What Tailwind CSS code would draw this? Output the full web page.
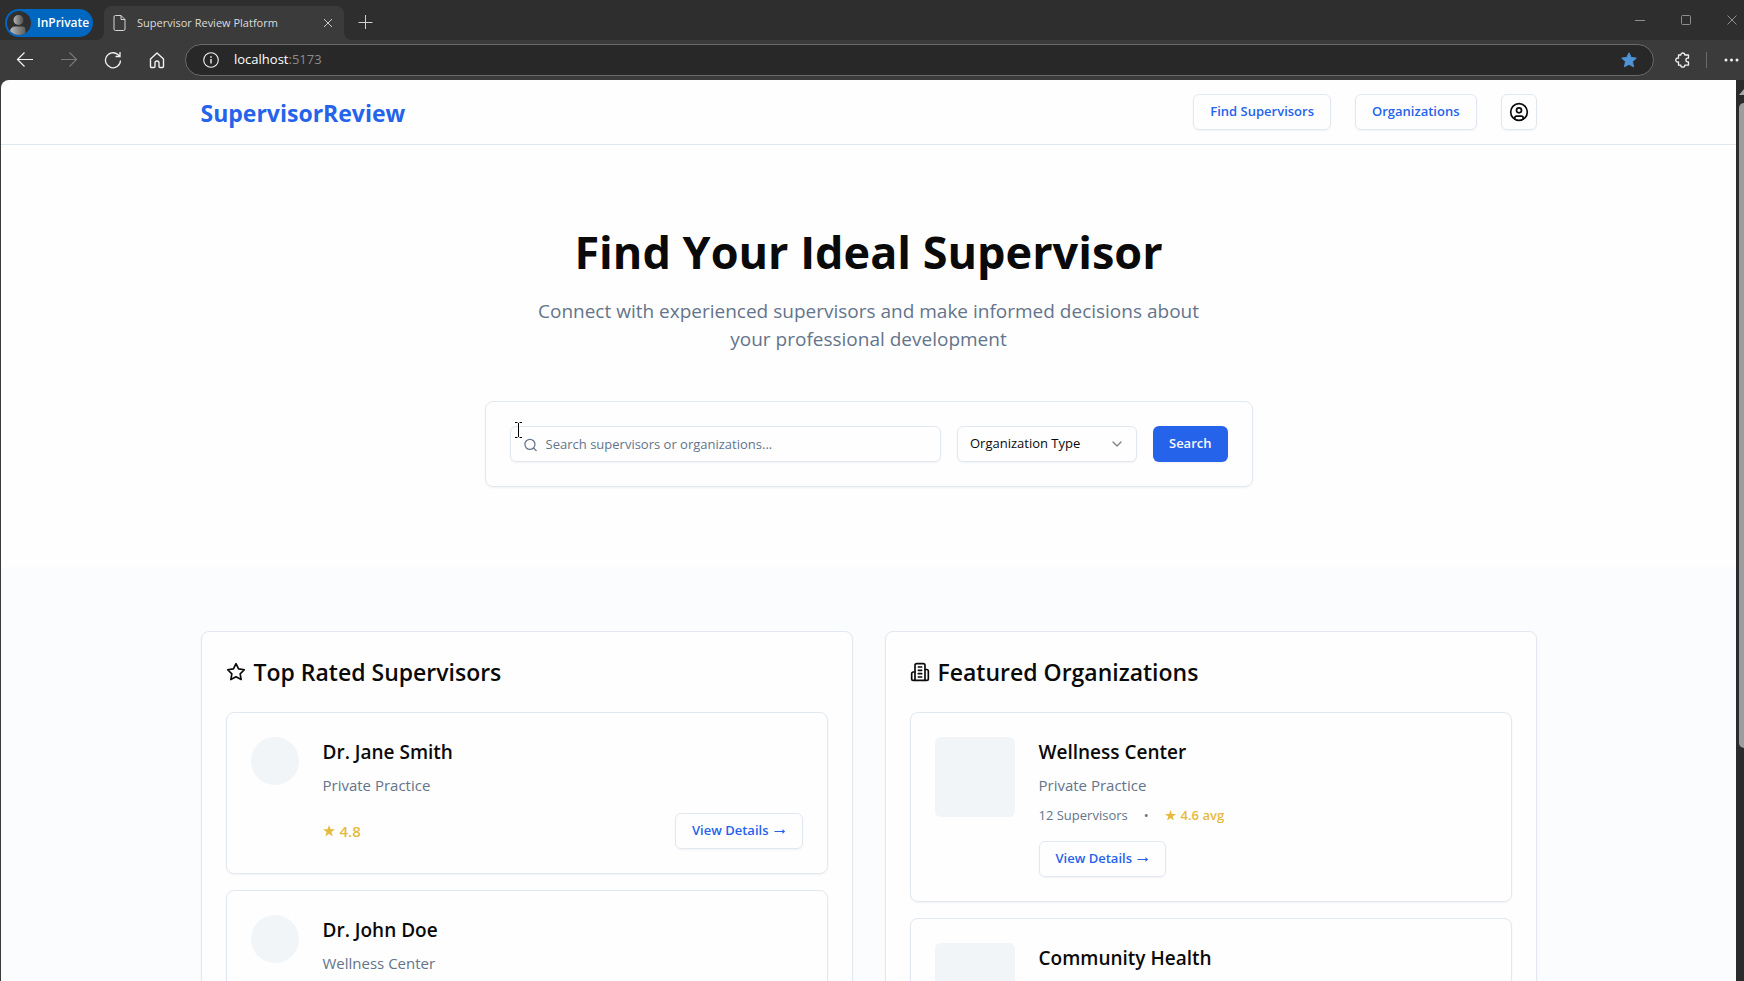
<!DOCTYPE html>
<html lang="en">
<head>
<meta charset="utf-8">
<meta name="viewport" content="width=device-width, initial-scale=1">
<title>Supervisor Review Platform</title>
<script src="https://cdn.jsdelivr.net/npm/@tailwindcss/browser@4"></script>
</head>
<body class="flex h-screen flex-col overflow-hidden bg-[#3b3b3b] font-['Open_Sans','Noto_Sans',sans-serif] text-[#0a0a0a]">

<!-- Tab strip -->
<div class="flex h-10 shrink-0 bg-[#2e2e2e] pl-[5px]">
  <button type="button" class="mt-[9px] flex h-7 w-[88px] items-center gap-1.5 rounded-full bg-[#0067c0] pl-0.5 text-xs font-semibold text-white">
    <svg class="size-6" viewBox="0 0 24 24" aria-hidden="true">
      <defs>
        <linearGradient id="person" x1="0" x2="1"><stop offset="0" stop-color="#b9b9b9"/><stop offset="1" stop-color="#5d5d5d"/></linearGradient>
        <linearGradient id="head" x1="0" x2="1"><stop offset="0" stop-color="#b4b4b4"/><stop offset="1" stop-color="#4c4c4c"/></linearGradient>
        <clipPath id="disc"><circle cx="12" cy="12" r="12"/></clipPath>
      </defs>
      <circle cx="12" cy="12" r="12" fill="#2f2f2f"/>
      <g clip-path="url(#disc)"><path d="M3 24v-3.500a5 5 0 0 1 5-5h7.500a3 3 0 0 1 3 3V24z" fill="url(#person)"/><circle cx="11.500" cy="9" r="5" fill="url(#head)"/></g>
    </svg>
    InPrivate
  </button>
  <div class="relative ml-[11px] mt-1.5 flex w-60 items-center rounded-t-lg bg-[#3b3b3b] px-2">
    <!-- Flared feet of the active tab -->
    <svg class="absolute -left-2 bottom-0 size-2" viewBox="0 0 8 8" fill="#3b3b3b" aria-hidden="true"><path d="M8 0v8H0a8 8 0 0 0 8-8z"/></svg>
    <svg class="absolute -right-2 bottom-0 size-2" viewBox="0 0 8 8" fill="#3b3b3b" aria-hidden="true"><path d="M0 0v8h8a8 8 0 0 1-8-8z"/></svg>
    <svg class="size-4 text-[#d6d6d6]" viewBox="0 0 16 16" fill="none" stroke="currentColor" aria-hidden="true"><path d="M3.500.5h5.500l4 4V14a1.500 1.500 0 0 1-1.500 1.500h-8A1.500 1.500 0 0 1 2 14V2A1.500 1.500 0 0 1 3.500.5zM9 .5V4.500h4"/></svg>
    <span class="ml-[9px] flex-1 whitespace-nowrap text-[11px] text-[#dcdcdc]">Supervisor Review Platform</span>
    <button type="button" aria-label="Close tab" class="px-[3px] py-1 text-[#c8c8c8]"><svg class="size-2.5" viewBox="0 0 10 10" fill="none" stroke="currentColor"><path d="m1 1 8 8M9 1 1 9"/></svg></button>
  </div>
  <button type="button" aria-label="New tab" class="ml-[13px] mt-1 text-[#d0d0d0]"><svg class="size-4" viewBox="0 0 16 16" fill="none" stroke="currentColor"><path d="M8.500 1v14M1.500 8.500h14"/></svg></button>
  <div class="ml-auto flex items-center gap-9 pr-[7px] text-[#8f8f8f]">
    <button type="button" aria-label="Minimize"><svg class="size-2.5" viewBox="0 0 10 10" fill="none" stroke="currentColor"><path d="M0 5.500h10"/></svg></button>
    <button type="button" aria-label="Maximize"><svg class="size-2.5" viewBox="0 0 10 10" fill="none" stroke="currentColor"><rect x=".5" y=".5" width="9" height="9" rx="1"/></svg></button>
    <button type="button" aria-label="Close"><svg class="size-2.5" viewBox="0 0 10 10" fill="none" stroke="currentColor"><path d="m.5.5 9 9M9.500.5l-9 9"/></svg></button>
  </div>
</div>

<!-- Toolbar -->
<div class="flex h-10 shrink-0 items-center bg-[#3b3b3b] pl-4 pr-[5px] text-[#f2f2f2]">
  <div class="flex items-center gap-[26px]">
    <button type="button" aria-label="Back"><svg class="size-[18px]" viewBox="0 0 18 18" fill="none" stroke="currentColor" stroke-width="1.200"><path d="M17 8.500H1.500M8.500 1.500l-7 7 7 7"/></svg></button>
    <button type="button" aria-label="Forward" disabled class="text-[#787878]"><svg class="size-[18px]" viewBox="0 0 18 18" fill="none" stroke="currentColor" stroke-width="1.200"><path d="M1 8.500h15.500M9.500 1.500l7 7-7 7"/></svg></button>
    <button type="button" aria-label="Refresh"><svg class="size-[18px]" viewBox="0 0 18 18" fill="none" stroke="currentColor" stroke-width="1.300"><path d="M16.500 9.500a7.500 7.500 0 1 1-2.600-5.900L15.800 5.200M16 1v4.500h-4.500"/></svg></button>
    <button type="button" aria-label="Home"><svg class="size-[18px]" viewBox="0 0 18 18" fill="none" stroke="currentColor" stroke-width="1.400" stroke-linejoin="round"><path d="M2.500 8 9 2l6.500 6v7.500a1 1 0 0 1-1 1H12a1 1 0 0 1-1-1V12a2 2 0 0 0-4 0v3.500a1 1 0 0 1-1 1H3.500a1 1 0 0 1-1-1z"/></svg></button>
  </div>
  <div class="ml-[19px] flex h-8 flex-1 items-center rounded-full border border-[#6a6a6a] bg-[#282828] pl-[17px] pr-4">
    <svg class="size-4" viewBox="0 0 16 16" fill="none" stroke="currentColor" stroke-width="1.100" aria-hidden="true"><circle cx="8" cy="8" r="7.300"/><path d="M8 7v4.500" stroke-width="1.400"/><path d="M8 4.300v1.400" stroke-width="1.500"/></svg>
    <span class="ml-[15px] flex-1 text-[13px] text-white">localhost<span class="text-[#8b8b8b]">:5173</span></span>
    <button type="button" aria-label="Favorite" class="text-[#4f93d6]"><svg class="size-4" viewBox="0 0 16 16" fill="currentColor" stroke="currentColor" stroke-linejoin="round"><path d="m8 .8 2.200 4.700 5.100.6-3.800 3.500 1 5.200L8 12.300l-4.500 2.500 1-5.200L.7 6.100l5.100-.6z"/></svg></button>
  </div>
  <button type="button" aria-label="Extensions" class="ml-[21px]"><svg class="size-4" viewBox="0 0 16 16" fill="none" stroke="currentColor" stroke-width="1.300" stroke-linejoin="round"><path d="M3.500 3h2.300a2 2 0 0 1 4 0h3.700v3.200h-1.200a1.900 1.900 0 0 0 0 3.700h1.200v3.300h-3.700a2 2 0 0 1-4 0H3.500v-3.300a2 2 0 1 1 0-3.700z"/></svg></button>
  <span class="ml-[15px] h-4 w-px bg-[#6a6a6a]"></span>
  <button type="button" aria-label="Settings and more" class="ml-[17px]"><svg class="h-4 w-[15px]" viewBox="0 0 15 16" fill="currentColor"><circle cx="2" cy="8" r="1.500"/><circle cx="7.500" cy="8" r="1.500"/><circle cx="13" cy="8" r="1.500"/></svg></button>
</div>

<!-- Viewport -->
<div class="flex min-h-0 flex-1 pl-px">
  <div class="min-w-0 flex-1 overflow-hidden rounded-tl-lg bg-[#fefefe]">

    <header class="border-b border-[#e2e8f0]">
      <div class="mx-auto flex h-16 max-w-[1400px] items-center justify-between px-8">
        <a href="#" class="pt-0.5 text-[23px] font-bold leading-8 text-[#2563eb]">SupervisorReview</a>
        <nav class="flex items-center gap-6">
          <a href="#supervisors" class="flex h-9 items-center rounded-md border border-[#e2e8f0] px-4 text-[13px] font-semibold text-[#2563eb] shadow-xs">Find Supervisors</a>
          <a href="#organizations" class="flex h-9 items-center rounded-md border border-[#e2e8f0] px-4 text-[13px] font-semibold text-[#2563eb] shadow-xs">Organizations</a>
          <button type="button" aria-label="Account" class="flex size-9 items-center justify-center rounded-md border border-[#e2e8f0] shadow-xs">
            <svg class="size-5" viewBox="0 0 24 24" fill="none" stroke="currentColor" stroke-width="2" stroke-linecap="round" stroke-linejoin="round"><circle cx="12" cy="12" r="10"/><circle cx="12" cy="10" r="3"/><path d="M7 20.662V19a2 2 0 0 1 2-2h6a2 2 0 0 1 2 2v1.662"/></svg>
          </button>
        </nav>
      </div>
    </header>

    <main>
      <section class="flex flex-col items-center px-8 py-20">
        <h1 class="text-center text-[45px] font-bold leading-[54px]">Find Your Ideal Supervisor</h1>
        <p class="mt-[18px] max-w-2xl text-center text-[19px] leading-7 text-[#64748b]">Connect with experienced supervisors and make informed decisions about your professional development</p>
        <form class="relative mt-12 flex w-full max-w-3xl gap-4 rounded-lg border border-[#e2e8f0] p-6 shadow-xs">
          <label class="flex h-9 flex-1 items-center rounded-md border border-[#e2e8f0] pl-3 pt-0.5 shadow-xs">
            <svg class="size-4 text-[#64748b]" viewBox="0 0 24 24" fill="none" stroke="currentColor" stroke-width="2" stroke-linecap="round" stroke-linejoin="round" aria-hidden="true"><circle cx="11" cy="11" r="8"/><path d="m21 21-4.300-4.300"/></svg>
            <input type="text" aria-label="Search" placeholder="Search supervisors or organizations..." class="ml-2 w-full bg-transparent text-[13px] outline-none placeholder:text-[#64748b]">
          </label>
          <div class="relative w-[180px]">
            <select aria-label="Organization Type" class="h-9 w-full appearance-none rounded-md border border-[#e2e8f0] bg-[#fefefe] px-3 text-[13px] shadow-xs"><option>Organization Type</option></select>
            <svg class="pointer-events-none absolute right-3 top-2.5 size-4 opacity-50" viewBox="0 0 24 24" fill="none" stroke="currentColor" stroke-width="2" stroke-linecap="round" stroke-linejoin="round" aria-hidden="true"><path d="m6 9 6 6 6-6"/></svg>
          </div>
          <button type="submit" class="h-9 rounded-md bg-[#2563eb] px-4 text-[13px] font-semibold text-slate-50 shadow-xs">Search</button>
          <!-- Text cursor -->
          <svg class="pointer-events-none absolute left-7 top-5 h-4 w-2" viewBox="0 0 8 16" fill="none" stroke="#000" aria-hidden="true"><path d="M1 .5h2.500M5.500.5H8M4.500 1v14M1 15.500h2.500M5.500 15.500H8"/></svg>
        </form>
      </section>

      <section class="bg-[#fbfcfe] py-16">
        <div class="mx-auto grid max-w-[1400px] grid-cols-2 gap-8 px-8">

          <div id="supervisors" class="rounded-lg border border-[#e2e8f0] bg-[#fefefe] p-6 shadow-xs">
            <h2 class="flex items-center gap-2 text-[23px] font-semibold leading-8">
              <svg class="size-5" viewBox="0 0 24 24" fill="none" stroke="currentColor" stroke-width="2" stroke-linecap="round" stroke-linejoin="round" aria-hidden="true"><path d="M12 2l3.090 6.260L22 9.270l-5 4.870 1.180 6.880L12 17.770l-6.180 3.250L7 14.140 2 9.270l6.910-1.010z"/></svg>
              Top Rated Supervisors
            </h2>
            <div class="mt-6 flex flex-col gap-4">
              <article class="flex gap-6 rounded-lg border border-[#e2e8f0] p-6 shadow-xs">
                <div class="size-12 shrink-0 rounded-full bg-[#f1f5f8]"></div>
                <div class="flex-1">
                  <h3 class="text-[19px] font-semibold leading-[30px]">Dr. Jane Smith</h3>
                  <p class="mt-1.5 text-[15px] leading-6 text-[#64748b]">Private Practice</p>
                  <div class="mt-4 flex items-center justify-between">
                    <span class="flex items-center gap-[5px] text-[15px] font-semibold text-[#e7b93c]"><svg class="size-3" viewBox="0 0 12 12" fill="currentColor" aria-hidden="true"><path d="m6 0 1.500 4.300H12L8.400 7l1.300 4.500L6 8.800l-3.700 2.700L3.600 7 0 4.300h4.500z"/></svg>4.8</span>
                    <a href="#jane-smith" class="flex h-9 items-center gap-[5px] rounded-md border border-[#e2e8f0] px-4 text-[13px] font-semibold text-[#2563eb] shadow-xs">View Details <svg class="size-3" viewBox="0 0 12 12" fill="none" stroke="currentColor" aria-hidden="true"><path d="M.5 6.500h10"/><path d="m8.500 4 2.500 2.500L8.500 9z" fill="currentColor" stroke="none"/></svg></a>
                  </div>
                </div>
              </article>
              <article class="flex gap-6 rounded-lg border border-[#e2e8f0] p-6 shadow-xs">
                <div class="size-12 shrink-0 rounded-full bg-[#f1f5f8]"></div>
                <div class="flex-1">
                  <h3 class="text-[19px] font-semibold leading-[30px]">Dr. John Doe</h3>
                  <p class="mt-1.5 text-[15px] leading-6 text-[#64748b]">Wellness Center</p>
                </div>
              </article>
            </div>
          </div>

          <div id="organizations" class="rounded-lg border border-[#e2e8f0] bg-[#fefefe] p-6 shadow-xs">
            <h2 class="flex items-center gap-2 text-[23px] font-semibold leading-8">
              <svg class="size-5" viewBox="0 0 24 24" fill="none" stroke="currentColor" stroke-width="2" stroke-linecap="round" stroke-linejoin="round" aria-hidden="true"><path d="M6 22V4a2 2 0 0 1 2-2h8a2 2 0 0 1 2 2v18Z"/><path d="M6 12H4a2 2 0 0 0-2 2v6a2 2 0 0 0 2 2h2M18 9h2a2 2 0 0 1 2 2v9a2 2 0 0 1-2 2h-2M10 6h4M10 10h4M10 14h4M10 18h4"/></svg>
              Featured Organizations
            </h2>
            <div class="mt-6 flex flex-col gap-4">
              <article class="flex gap-6 rounded-lg border border-[#e2e8f0] p-6 shadow-xs">
                <div class="size-20 shrink-0 rounded-md bg-[#f1f5f8]"></div>
                <div class="flex-1">
                  <h3 class="text-[19px] font-semibold leading-[30px]">Wellness Center</h3>
                  <p class="mt-1.5 text-[15px] leading-6 text-[#64748b]">Private Practice</p>
                  <div class="mt-2 flex items-center gap-4 text-[13px] leading-5 text-[#64748b]">
                    <span>12 Supervisors</span><span>•</span>
                    <span class="flex items-center gap-[5px] font-semibold text-[#e7b93c]"><svg class="size-[11px]" viewBox="0 0 12 12" fill="currentColor" aria-hidden="true"><path d="m6 0 1.500 4.300H12L8.400 7l1.300 4.500L6 8.800l-3.700 2.700L3.600 7 0 4.300h4.500z"/></svg>4.6 avg</span>
                  </div>
                  <a href="#wellness-center" class="mt-4 flex h-9 w-fit items-center gap-[5px] rounded-md border border-[#e2e8f0] px-4 text-[13px] font-semibold text-[#2563eb] shadow-xs">View Details <svg class="size-3" viewBox="0 0 12 12" fill="none" stroke="currentColor" aria-hidden="true"><path d="M.5 6.500h10"/><path d="m8.500 4 2.500 2.500L8.500 9z" fill="currentColor" stroke="none"/></svg></a>
                </div>
              </article>
              <article class="flex gap-6 rounded-lg border border-[#e2e8f0] p-6 shadow-xs">
                <div class="size-20 shrink-0 rounded-md bg-[#f1f5f8]"></div>
                <div class="flex-1">
                  <h3 class="text-[19px] font-semibold leading-[30px]">Community Health</h3>
                </div>
              </article>
            </div>
          </div>

        </div>
      </section>
    </main>
  </div>

  <!-- Scrollbar, cut off by the window edge -->
  <div class="flex w-2 shrink-0 flex-col overflow-hidden bg-[#2b2b2b] pl-[3px]" aria-hidden="true">
    <svg class="mt-2 h-2 w-2.5 shrink-0" viewBox="0 0 10 8" fill="#a8a8a8"><path d="M0 7 5 1l5 6z"/></svg>
    <div class="mt-[7px] h-[645px] w-2.5 rounded-full bg-[#9d9d9d]"></div>
  </div>
</div>
</body>
</html>
